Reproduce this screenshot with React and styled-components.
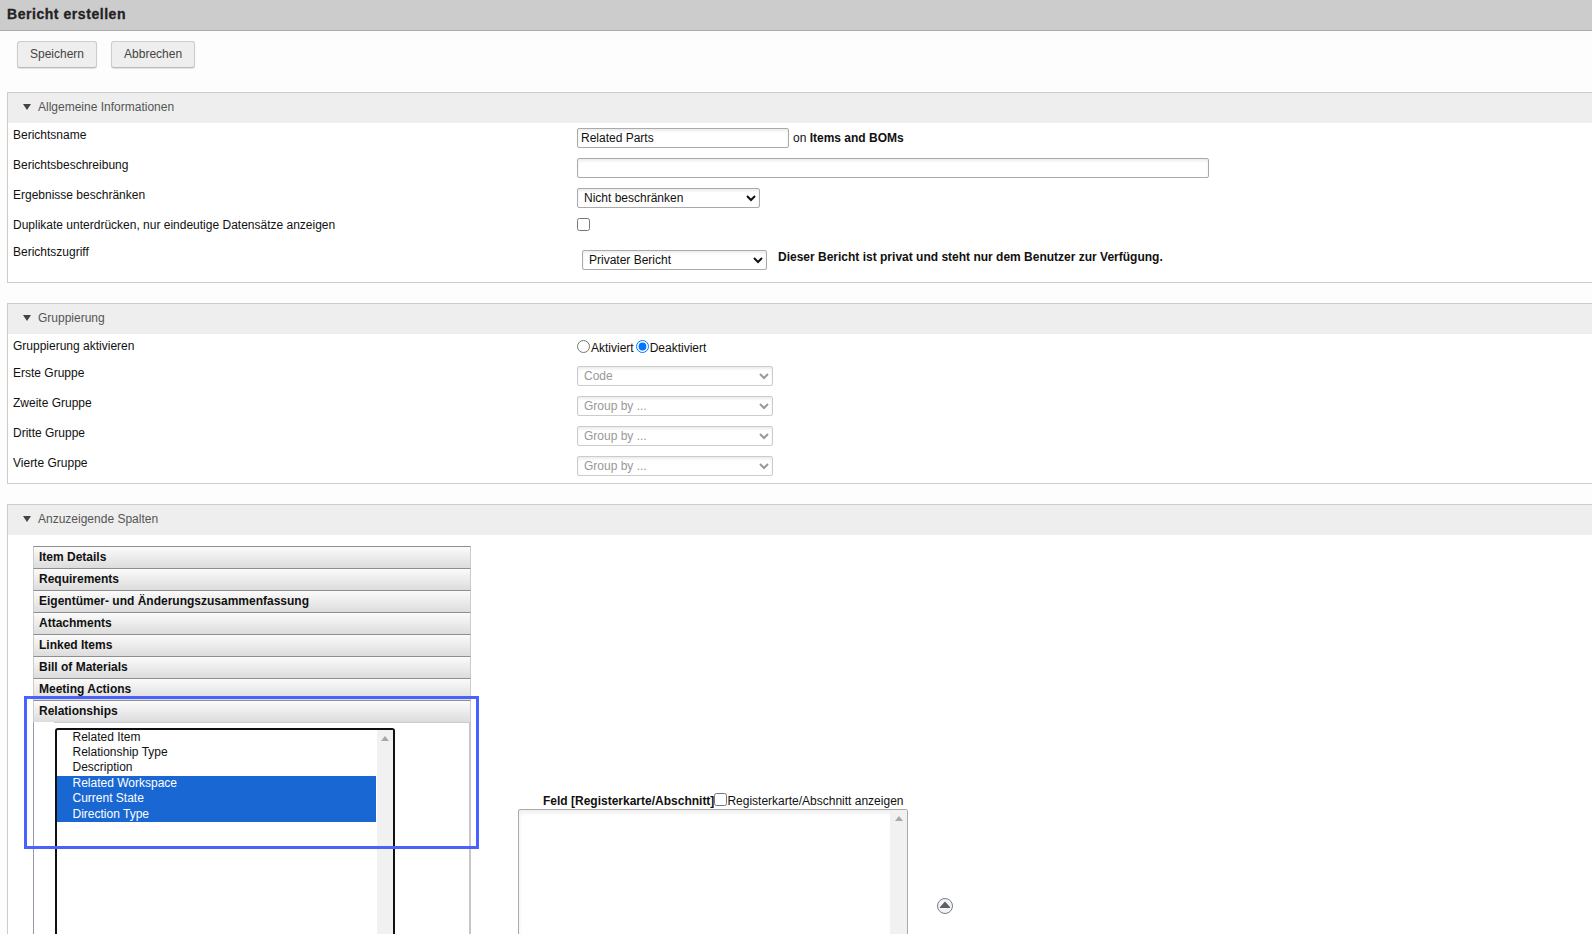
import styled, { createGlobalStyle } from "styled-components";

const Global = createGlobalStyle`
  html, body { margin:0; padding:0; height:100%; overflow:hidden; background:#fdfdfd; }
  body { font-family:"Liberation Sans", Arial, sans-serif; font-size:12px; color:#111; }
`;

const Page = styled.div` width:1592px; height:934px; overflow:hidden; `;
const TitleBar = styled.div`
  height:30px; background:#ccc; border-bottom:1px solid #aaa;
  display:flex; align-items:center; padding-left:7px;
  h1{ margin:0 0 2px; font-size:14px; font-weight:700; letter-spacing:.55px; color:#222; -webkit-text-stroke:.3px #222; }
`;
const Toolbar = styled.div` display:flex; gap:14px; padding:10px 0 0 17px; height:51px; `;
const Button = styled.button`
  height:27px; padding:0 12px 2px; background:#eee; color:#444;
  border:1px solid #ccc; border-bottom-color:#bbb; border-radius:3px;
  font:12px "Liberation Sans", Arial, sans-serif;
  box-shadow:0 1px 1px rgba(0,0,0,.12);
`;

const Section = styled.section`
  margin:0 0 20px 7px; border:1px solid #ccc; border-right:0; background:#fff;
  padding-bottom:${p => p.$pb || 0}px;
`;
const SectionHeader = styled.div`
  height:30px; background:#eee; color:#555; display:flex; align-items:center;
  gap:7px; padding:0 0 2px 15px; box-sizing:border-box;
`;
const Row = styled.div`
  display:grid; grid-template-columns:564px 1fr; padding-left:5px; height:${p => p.$h || 30}px;
`;
const Label = styled.div` padding-top:5px; line-height:14px; `;
const Control = styled.div`
  display:flex; align-items:${p => p.$top ? "flex-start" : "center"}; height:20px;
  margin-top:${p => p.$mt || 5}px;
  padding-left:${p => p.$indent || 0}px;
`;
const TextInput = styled.input`
  box-sizing:border-box; width:${p => p.$w}px; height:20px; padding:0 3px;
  border:1px solid #aaa; border-radius:2px; background:#fff; outline:0;
  font:12px "Liberation Sans", Arial, sans-serif; color:#111;
  box-shadow:inset 0 2px 3px rgba(0,0,0,.08);
`;
const Select = styled.select`
  box-sizing:border-box; width:${p => p.$w}px; height:20px; padding:0 2px;
  border:1px solid ${p => p.disabled ? "#ccc" : "#aaa"}; border-radius:2px; background:#fff;
  font:12px "Liberation Sans", Arial, sans-serif;
  color:${p => p.disabled ? "#999" : "#111"}; opacity:1;
  box-shadow:inset 0 2px 3px rgba(0,0,0,.08);
`;
const Suffix = styled.span` margin-left:4px; b{ font-weight:700; } `;
const Notice = styled.b` margin:0 0 6px 11px; font-weight:700; `;
const Check = styled.input` width:13px; height:13px; margin:0; flex:none; `;
const Radios = styled.label`
  display:flex; align-items:center; line-height:14px; margin-top:-2px;
  input{ width:13px; height:13px; margin:-4px 0 0 0; }
  span{ margin:0 2px 0 1px; }
`;

const ColumnsBody = styled.div` display:flex; align-items:flex-start; padding:11px 0 0 25px; `;
const Accordion = styled.div` position:relative; width:438px; flex:none; `;
const AccHeader = styled.div`
  box-sizing:border-box; height:22px; padding:3px 0 0 5px; line-height:15px; font-weight:700;
  border:1px solid #ccc; border-top-color:#8f8f8f; border-bottom:0;
  background:linear-gradient(#fbfbfb, #dcdcdc); color:#111;
`;
const AccBody = styled.div`
  border-top:1px solid #ccc; border-left:1px solid #99a; border-right:2px solid #c6c6c6;
  padding:5px 0 0 21px; position:relative;
  &::before{ content:""; position:absolute; left:0; top:-1px; width:20px; height:1px; background:#fff; }
`;
const ListBox = styled.div`
  display:flex; box-sizing:border-box; width:340px; height:420px;
  border:2px solid #111; border-radius:3px; background:#fff; overflow:hidden;
`;
const Options = styled.div` flex:1; margin-right:1px; `;
const Option = styled.div`
  padding-left:15.5px; line-height:15px; height:${p => p.$selected ? 15.33 : 15}px;
  background:${p => p.$selected ? "#1967d2" : "transparent"};
  color:${p => p.$selected ? "#fff" : "#111"};
  &:nth-child(4){ margin-top:1px; }
`;
const ScrollTrack = styled.div`
  width:${p => p.$w}px; flex:none; background:#f1f1f1; display:flex; justify-content:center; padding-top:6px;
  svg{ display:block; }
`;
const Highlight = styled.div`
  position:absolute; left:-9px; top:150px; width:455px; height:153px; box-sizing:border-box;
  border:3px solid #4a60ff; pointer-events:none;
`;

const FieldColumn = styled.div` margin:246px 0 0 47px; `;
const FieldHead = styled.div`
  display:flex; align-items:flex-end; padding-left:25px; height:16px; line-height:14px;
  b{ font-weight:700; }
  input{ margin-bottom:2px; }
`;
const FieldRow = styled.div` display:flex; align-items:flex-start; gap:29px; margin-top:1px; `;
const FieldBox = styled.div`
  display:flex; justify-content:flex-end; box-sizing:border-box; width:390px; height:300px;
  border:1px solid #aaa; border-radius:2px; background:#fff; box-shadow:inset 0 3px 4px rgba(0,0,0,.07);
`;
const MoveUp = styled.svg` margin-top:89px; flex:none; `;

const Arrow = () => (
  <svg width="8" height="6" viewBox="0 0 8 6"><path d="M0 0h8L4 6z" fill="#444" /></svg>
);
const ScrollUp = () => (
  <svg width="8" height="5" viewBox="0 0 8 5"><path d="M4 0l4 5H0z" fill="#a8a8a8" /></svg>
);

const tabs = ["Item Details", "Requirements", "Eigentümer- und Änderungszusammenfassung", "Attachments", "Linked Items", "Bill of Materials", "Meeting Actions", "Relationships"];
const fields = [["Related Item"], ["Relationship Type"], ["Description"], ["Related Workspace", 1], ["Current State", 1], ["Direction Type", 1]];

export default function App() {
  return (
    <Page>
      <Global />
      <TitleBar><h1>Bericht erstellen</h1></TitleBar>
      <Toolbar>
        <Button>Speichern</Button>
        <Button>Abbrechen</Button>
      </Toolbar>

      <Section $pb={12}>
        <SectionHeader><Arrow />Allgemeine Informationen</SectionHeader>
        <Row>
          <Label>Berichtsname</Label>
          <Control><TextInput $w={212} defaultValue="Related Parts" /><Suffix>on <b>Items and BOMs</b></Suffix></Control>
        </Row>
        <Row>
          <Label>Berichtsbeschreibung</Label>
          <Control><TextInput $w={632} /></Control>
        </Row>
        <Row>
          <Label>Ergebnisse beschränken</Label>
          <Control><Select $w={183}><option>Nicht beschränken</option></Select></Control>
        </Row>
        <Row $h={27}>
          <Label>Duplikate unterdrücken, nur eindeutige Datensätze anzeigen</Label>
          <Control $top><Check type="checkbox" /></Control>
        </Row>
        <Row>
          <Label>Berichtszugriff</Label>
          <Control $indent={5} $mt={10}>
            <Select $w={185}><option>Privater Bericht</option></Select>
            <Notice>Dieser Bericht ist privat und steht nur dem Benutzer zur Verfügung.</Notice>
          </Control>
        </Row>
      </Section>

      <Section $pb={2}>
        <SectionHeader><Arrow />Gruppierung</SectionHeader>
        <Row $h={27}>
          <Label>Gruppierung aktivieren</Label>
          <Control>
            <Radios><input type="radio" name="grp" /><span>Aktiviert</span></Radios>
            <Radios><input type="radio" name="grp" defaultChecked /><span>Deaktiviert</span></Radios>
          </Control>
        </Row>
        {[["Erste Gruppe", "Code"], ["Zweite Gruppe", "Group by ..."], ["Dritte Gruppe", "Group by ..."], ["Vierte Gruppe", "Group by ..."]].map(([label, value]) => (
          <Row key={label}>
            <Label>{label}</Label>
            <Control><Select $w={196} disabled><option>{value}</option></Select></Control>
          </Row>
        ))}
      </Section>

      <Section>
        <SectionHeader><Arrow />Anzuzeigende Spalten</SectionHeader>
        <ColumnsBody>
          <Accordion>
            {tabs.map(t => <AccHeader key={t}>{t}</AccHeader>)}
            <AccBody>
              <ListBox>
                <Options>
                  {fields.map(([name, sel]) => <Option key={name} $selected={sel}>{name}</Option>)}
                </Options>
                <ScrollTrack $w={16}><ScrollUp /></ScrollTrack>
              </ListBox>
            </AccBody>
            <Highlight />
          </Accordion>
          <FieldColumn>
            <FieldHead>
              <b>Feld [Registerkarte/Abschnitt]</b>
              <Check type="checkbox" />
              <span>Registerkarte/Abschnitt anzeigen</span>
            </FieldHead>
            <FieldRow>
              <FieldBox><ScrollTrack $w={17}><ScrollUp /></ScrollTrack></FieldBox>
              <MoveUp width="16" height="16" viewBox="0 0 16 16">
                <circle cx="8" cy="8" r="7.5" fill="#f4f4f4" stroke="#777c85" />
                <path d="M8 3.5l5 5.5v1H3V9z" fill="#5a5f68" />
              </MoveUp>
            </FieldRow>
          </FieldColumn>
        </ColumnsBody>
      </Section>
    </Page>
  );
}
